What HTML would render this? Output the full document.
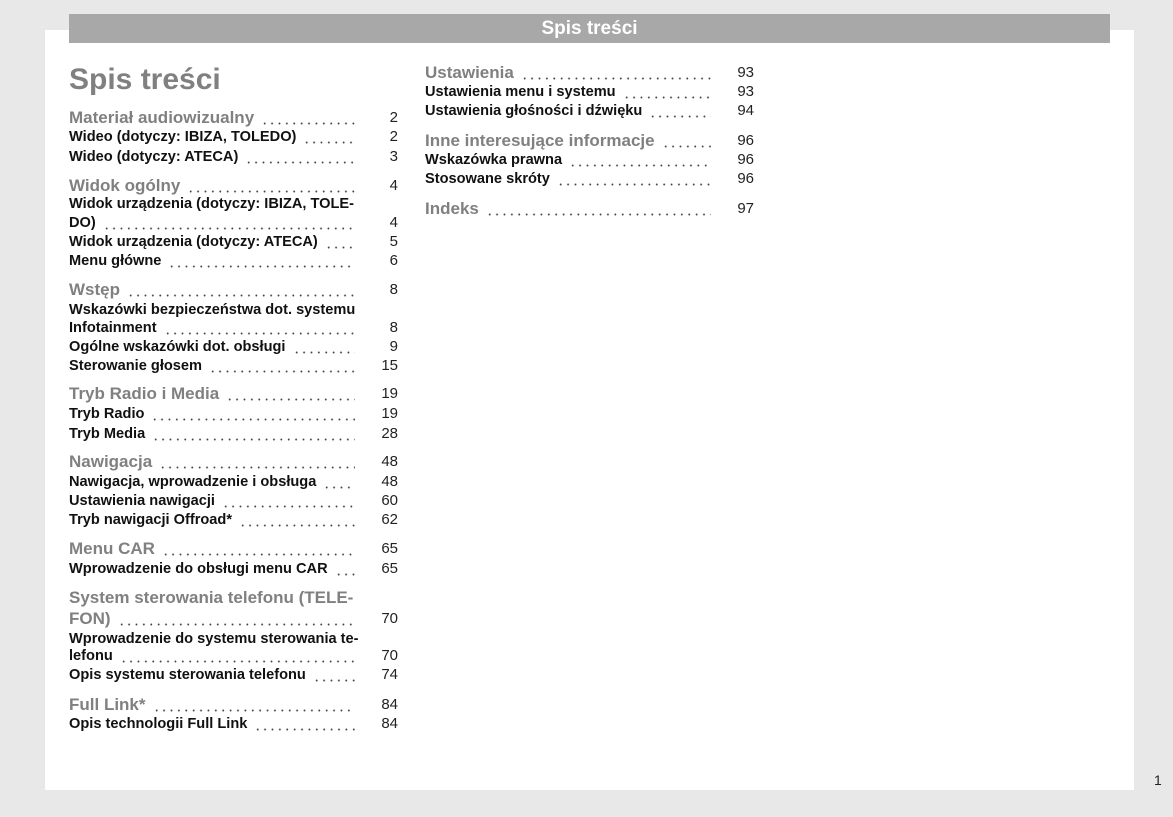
<!DOCTYPE html>
<html><head><meta charset="utf-8"><style>
body{margin:0;width:1173px;height:817px;background:#e8e8e8;font-family:"Liberation Sans",Arial,sans-serif;position:relative;overflow:hidden}
.page{position:absolute;left:45px;top:30px;width:1089px;height:760px;background:#fff}
.bar{position:absolute;left:69px;top:14px;width:1041px;height:29px;background:#a8a8a8;color:#fff;font-weight:bold;font-size:19px;line-height:30px;text-align:center}
.t{position:absolute;left:69px;top:61px;font-size:30px;font-weight:bold;color:#808080;line-height:38px}
.r{position:absolute;height:20px;line-height:20px;display:flex;white-space:nowrap}
.L{left:69px;width:329px}.R{left:425px;width:329px}
.r .a{font-weight:bold;font-size:14.6px;color:#111}
.r.h .a{font-size:17px;color:#808080}
.r .d{flex:1;margin:0 0 0 7px;background:radial-gradient(circle,#444 0.8px,transparent 1.1px) repeat-x;background-size:7.4px 3px;background-position:0 14px}
.r .n{width:43px;text-align:right;font-size:15px;color:#222}
.r.nd .d{background:none}
.pn{position:absolute;left:1154px;top:772px;font-size:14px;color:#222}
</style></head><body>
<div class="page"></div>
<div class="bar">Spis treści</div>
<div class="t">Spis treści</div>

<div class="r L h" style="top:108px"><span class="a">Materiał audiowizualny</span><span class="d"></span><span class="n">2</span></div>
<div class="r L" style="top:127px"><span class="a">Wideo (dotyczy: IBIZA, TOLEDO)</span><span class="d"></span><span class="n">2</span></div>
<div class="r L" style="top:147px"><span class="a">Wideo (dotyczy: ATECA)</span><span class="d"></span><span class="n">3</span></div>
<div class="r L h" style="top:176px"><span class="a">Widok ogólny</span><span class="d"></span><span class="n">4</span></div>
<div class="r L nd" style="top:194px"><span class="a">Widok urządzenia (dotyczy: IBIZA, TOLE-</span><span class="d"></span><span class="n"></span></div>
<div class="r L" style="top:213px"><span class="a">DO)</span><span class="d"></span><span class="n">4</span></div>
<div class="r L" style="top:232px"><span class="a">Widok urządzenia (dotyczy: ATECA)</span><span class="d"></span><span class="n">5</span></div>
<div class="r L" style="top:251px"><span class="a">Menu główne</span><span class="d"></span><span class="n">6</span></div>
<div class="r L h" style="top:280px"><span class="a">Wstęp</span><span class="d"></span><span class="n">8</span></div>
<div class="r L nd" style="top:300px"><span class="a">Wskazówki bezpieczeństwa dot. systemu</span><span class="d"></span><span class="n"></span></div>
<div class="r L" style="top:318px"><span class="a">Infotainment</span><span class="d"></span><span class="n">8</span></div>
<div class="r L" style="top:337px"><span class="a">Ogólne wskazówki dot. obsługi</span><span class="d"></span><span class="n">9</span></div>
<div class="r L" style="top:356px"><span class="a">Sterowanie głosem</span><span class="d"></span><span class="n">15</span></div>
<div class="r L h" style="top:384px"><span class="a">Tryb Radio i Media</span><span class="d"></span><span class="n">19</span></div>
<div class="r L" style="top:404px"><span class="a">Tryb Radio</span><span class="d"></span><span class="n">19</span></div>
<div class="r L" style="top:424px"><span class="a">Tryb Media</span><span class="d"></span><span class="n">28</span></div>
<div class="r L h" style="top:452px"><span class="a">Nawigacja</span><span class="d"></span><span class="n">48</span></div>
<div class="r L" style="top:472px"><span class="a">Nawigacja, wprowadzenie i obsługa</span><span class="d"></span><span class="n">48</span></div>
<div class="r L" style="top:491px"><span class="a">Ustawienia nawigacji</span><span class="d"></span><span class="n">60</span></div>
<div class="r L" style="top:510px"><span class="a">Tryb nawigacji Offroad*</span><span class="d"></span><span class="n">62</span></div>
<div class="r L h" style="top:539px"><span class="a">Menu CAR</span><span class="d"></span><span class="n">65</span></div>
<div class="r L" style="top:559px"><span class="a">Wprowadzenie do obsługi menu CAR</span><span class="d"></span><span class="n">65</span></div>
<div class="r L h nd" style="top:588px"><span class="a">System sterowania telefonu (TELE-</span><span class="d"></span><span class="n"></span></div>
<div class="r L h" style="top:609px"><span class="a">FON)</span><span class="d"></span><span class="n">70</span></div>
<div class="r L nd" style="top:629px"><span class="a">Wprowadzenie do systemu sterowania te-</span><span class="d"></span><span class="n"></span></div>
<div class="r L" style="top:646px"><span class="a">lefonu</span><span class="d"></span><span class="n">70</span></div>
<div class="r L" style="top:665px"><span class="a">Opis systemu sterowania telefonu</span><span class="d"></span><span class="n">74</span></div>
<div class="r L h" style="top:695px"><span class="a">Full Link*</span><span class="d"></span><span class="n">84</span></div>
<div class="r L" style="top:714px"><span class="a">Opis technologii Full Link</span><span class="d"></span><span class="n">84</span></div>

<div class="r R h" style="top:63px"><span class="a">Ustawienia</span><span class="d"></span><span class="n">93</span></div>
<div class="r R" style="top:82px"><span class="a">Ustawienia menu i systemu</span><span class="d"></span><span class="n">93</span></div>
<div class="r R" style="top:101px"><span class="a">Ustawienia głośności i dźwięku</span><span class="d"></span><span class="n">94</span></div>
<div class="r R h" style="top:131px"><span class="a">Inne interesujące informacje</span><span class="d"></span><span class="n">96</span></div>
<div class="r R" style="top:150px"><span class="a">Wskazówka prawna</span><span class="d"></span><span class="n">96</span></div>
<div class="r R" style="top:169px"><span class="a">Stosowane skróty</span><span class="d"></span><span class="n">96</span></div>
<div class="r R h" style="top:199px"><span class="a">Indeks</span><span class="d"></span><span class="n">97</span></div>

<div class="pn">1</div>
</body></html>
